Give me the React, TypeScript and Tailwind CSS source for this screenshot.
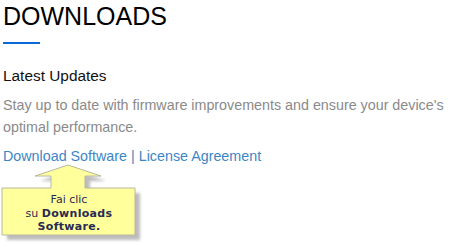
import { type FC } from "react";

const Callout: FC = () => {
  const pts =
    "68,165 101,176 85,176 85,188 135,188 135,235 2,235 2,188 51,188 51,176 35,176";
  return (
    <div className="absolute left-0 top-0 h-[246px] w-[160px] pointer-events-none">
      <svg width="160" height="246" className="absolute left-0 top-0">
        <defs>
          <filter id="blur" x="-10%" y="-10%" width="130%" height="130%">
            <feGaussianBlur stdDeviation="1.5" />
          </filter>
        </defs>
        <polygon points={pts} fill="#bdbdbd" transform="translate(5,5)" filter="url(#blur)" />
        <polygon points={pts} fill="#ffff9c" stroke="#b8b8a0" strokeWidth="1" />
      </svg>
      <div className="absolute left-[2px] top-[193px] w-[134px] text-center text-[11px] leading-[13.5px] text-[#2a2a52] [font-family:'DejaVu_Sans',Verdana,sans-serif]">
        <div>Fai clic</div>
        <div>
          su <span className="font-bold tracking-[0.3px]">Downloads</span>
        </div>
        <div className="font-bold tracking-[0.3px]">Software.</div>
      </div>
    </div>
  );
};

const App: FC = () => {
  return (
    <div className="relative h-[246px] w-[451px] overflow-hidden bg-white [font-family:'Liberation_Sans',Arial,sans-serif]">
      <div className="px-[3px] pt-[1px]">
        <h1 className="text-[25px] leading-[30px] text-black">DOWNLOADS</h1>
        <div className="mt-[11px] h-[2px] w-[37px] bg-[#0a6ad8]" />
        <h2 className="mt-[22px] text-[15.4px] leading-[20px] text-[#111]">Latest Updates</h2>
        <p className="mt-[8px] text-[14.3px] leading-[22px] text-[#8a8a8a]">
          Stay up to date with firmware improvements and ensure your device's optimal performance.
        </p>
        <div className="mt-[8px] text-[14.3px] leading-[20px] text-[#3d86c6]">
          <span>Download Software</span>
          <span className="px-[4px]">|</span>
          <span>License Agreement</span>
        </div>
      </div>
      <Callout />
    </div>
  );
};

export default App;
